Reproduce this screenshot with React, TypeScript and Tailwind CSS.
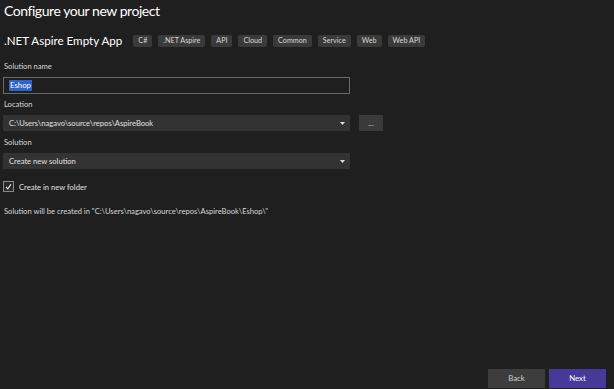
import React from "react";

const tags = ["C#", ".NET Aspire", "API", "Cloud", "Common", "Service", "Web", "Web API"];

function Caret() {
  return (
    <svg width="5" height="3" viewBox="0 0 5 3" className="shrink-0">
      <path d="M0 0 H5 L2.5 3 Z" fill="#e0e0e0" />
    </svg>
  );
}

export default function App() {
  return (
    <div
      className="w-[614px] h-[389px] bg-[#1f1f1f] text-[#e6e6e6] flex flex-col overflow-hidden"
      style={{ fontFamily: 'Lato, "Open Sans", sans-serif' }}
    >
      <div className="pl-[4px] h-[22px] text-[14px] tracking-[-0.45px] leading-[22px] text-white">Configure your new project</div>

      <div className="flex items-center pl-[4px] mt-[11px] h-[16px]">
        <div className="text-[11.6px] text-white mr-[11px] leading-[16px]">.NET Aspire Empty App</div>
        <div className="flex gap-[6px]">
          {tags.map((t) => (
            <div
              key={t}
              className="h-[12px] px-[5px] rounded-[2px] bg-[#3a3a3a] text-[7.2px] leading-[12px] text-[#d8d8d8]"
            >
              {t}
            </div>
          ))}
        </div>
      </div>

      <div className="pl-[4px] mt-[11px] text-[7.6px] leading-[12px] text-[#d8d8d8]">Solution name</div>
      <div className="ml-[3px] mt-[5px] w-[347px] h-[17px] border border-[#6a6a6a] bg-[#1f1f1f] flex items-center pl-[5px]">
        <span className="bg-[#2f63c7] text-white text-[7.8px] leading-[11px] px-[1px]">Eshop</span>
      </div>

      <div className="pl-[4px] mt-[4px] text-[7.6px] leading-[12px] text-[#d8d8d8]">Location</div>
      <div className="flex items-center mt-[5px] ml-[3px]">
        <div className="w-[347px] h-[16px] bg-[#333333] flex items-center justify-between pl-[6px] pr-[5px]">
          <span className="text-[7.6px] text-[#e0e0e0] leading-[12px]">C:\Users\nagavo\source\repos\AspireBook</span>
          <Caret />
        </div>
        <div className="ml-[9px] w-[24px] h-[16px] bg-[#3a3a3a] flex items-center justify-center text-[8px] leading-[8px] text-[#cfcfcf]">
          ...
        </div>
      </div>

      <div className="pl-[4px] mt-[5px] text-[7.6px] leading-[12px] text-[#d8d8d8]">Solution</div>
      <div className="ml-[3px] mt-[5px] w-[347px] h-[16px] bg-[#333333] flex items-center justify-between pl-[6px] pr-[5px]">
        <span className="text-[7.6px] text-[#e0e0e0] leading-[12px]">Create new solution</span>
        <Caret />
      </div>

      <div className="flex items-center ml-[3px] mt-[12px] h-[11px]">
        <div className="w-[11px] h-[11px] border border-[#8a8a8a] bg-[#2a2a2a] flex items-center justify-center">
          <svg width="7" height="7" viewBox="0 0 7 7">
            <path d="M1 4 L2.8 5.8 L6 1.2" stroke="#f0f0f0" strokeWidth="1.1" fill="none" />
          </svg>
        </div>
        <span className="ml-[5px] text-[7.6px] leading-[12px] text-[#e0e0e0]">Create in new folder</span>
      </div>

      <div className="pl-[4px] mt-[13px] text-[7.6px] leading-[12px] text-[#d8d8d8]">
        Solution will be created in "C:\Users\nagavo\source\repos\AspireBook\Eshop\"
      </div>

      <div className="flex-1" />
      <div className="flex justify-end gap-[4px] pr-[8px] pb-[1px]">
        <div className="w-[57px] h-[19px] bg-[#3d3d3d] flex items-center justify-center text-[7.8px] text-[#d0d0d0]">Back</div>
        <div className="w-[57px] h-[19px] bg-[#46399a] flex items-center justify-center text-[7.8px] text-white">Next</div>
      </div>
    </div>
  );
}
